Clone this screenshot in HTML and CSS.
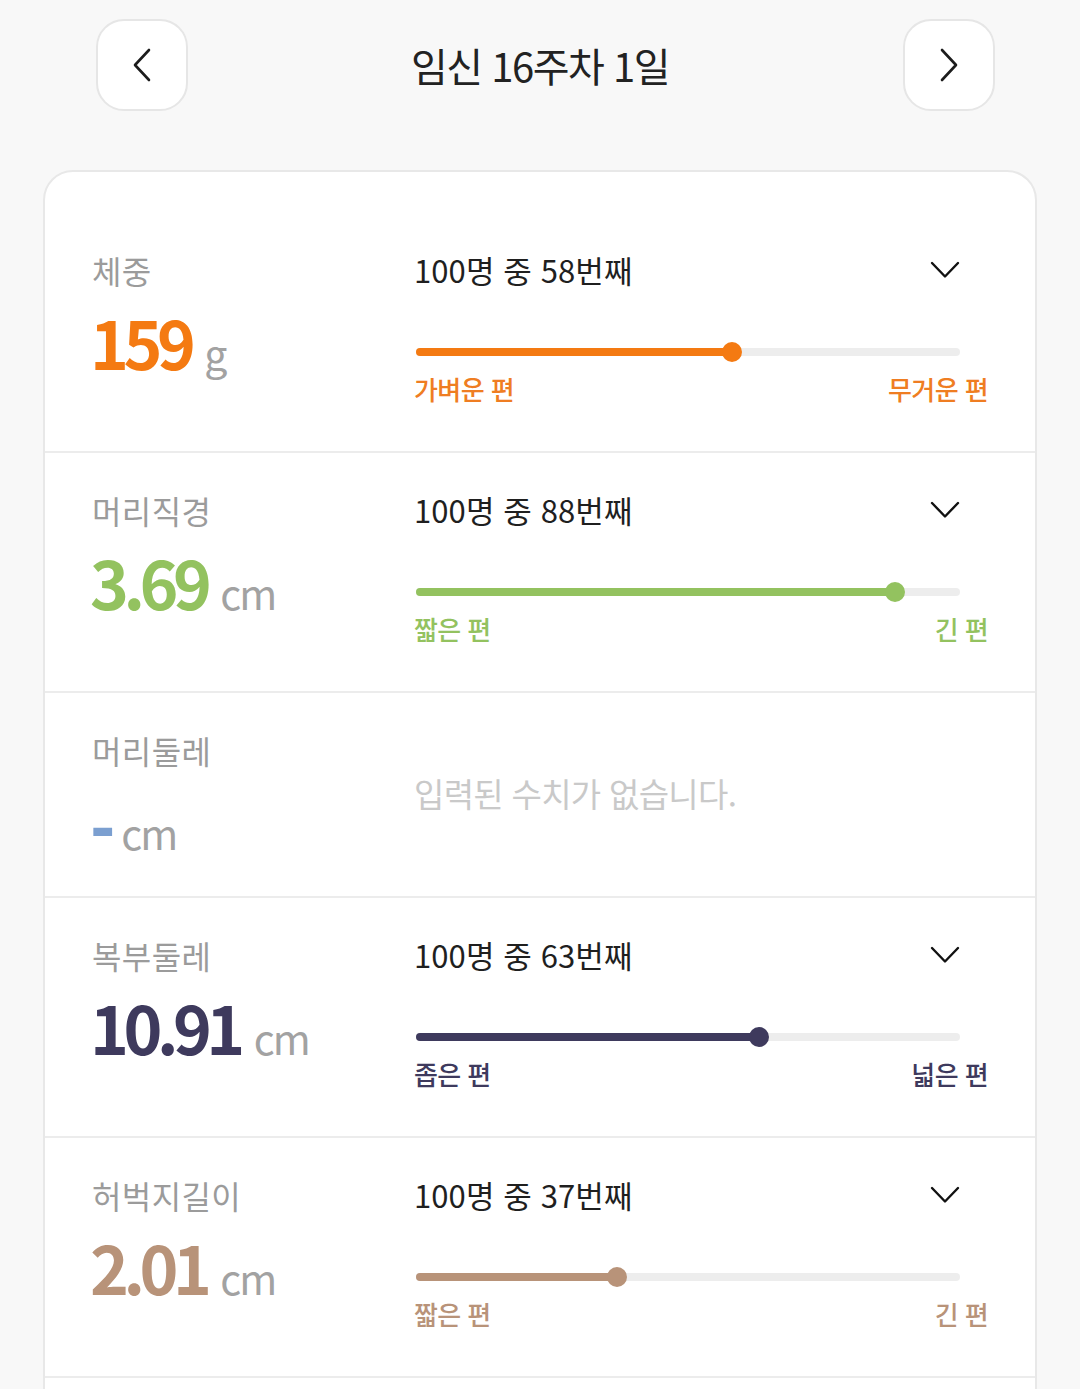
FILE: index.html
```html
<!DOCTYPE html>
<html lang="ko">
<head>
<meta charset="utf-8">
<title>임신 16주차 1일</title>
<link rel="stylesheet" href="styles.css">
</head>
<body>
<header class="header">
  <button class="nav-btn" aria-label="이전">
    <svg width="20" height="34" viewBox="0 0 20 34"><path d="M17 2 L3 17 L17 32" fill="none" stroke="#1c1c1c" stroke-width="2.6" stroke-linecap="round" stroke-linejoin="round"/></svg>
  </button>
  <h1 class="title">임신 16주차 1일</h1>
  <button class="nav-btn" aria-label="다음">
    <svg width="20" height="34" viewBox="0 0 20 34"><path d="M3 2 L17 17 L3 32" fill="none" stroke="#1c1c1c" stroke-width="2.6" stroke-linecap="round" stroke-linejoin="round"/></svg>
  </button>
</header>

<main class="card">
  <section class="row orange">
    <div class="left">
      <div class="label">체중</div>
      <div class="value-line"><span class="value">159</span><span class="unit">g</span></div>
    </div>
    <div class="right">
      <div class="rank-line"><span class="rank">100명 중 58번째</span>
        <svg class="chev" width="30" height="18" viewBox="0 0 30 18"><path d="M2 2 L15 15.5 L28 2" fill="none" stroke="#111" stroke-width="2.4" stroke-linecap="round" stroke-linejoin="round"/></svg>
      </div>
      <div class="track"><div class="fill" style="width:58%"></div><div class="thumb" style="left:58%"></div></div>
      <div class="ends"><span>가벼운 편</span><span>무거운 편</span></div>
    </div>
  </section>

  <section class="row green">
    <div class="left">
      <div class="label">머리직경</div>
      <div class="value-line"><span class="value">3.69</span><span class="unit">cm</span></div>
    </div>
    <div class="right">
      <div class="rank-line"><span class="rank">100명 중 88번째</span>
        <svg class="chev" width="30" height="18" viewBox="0 0 30 18"><path d="M2 2 L15 15.5 L28 2" fill="none" stroke="#111" stroke-width="2.4" stroke-linecap="round" stroke-linejoin="round"/></svg>
      </div>
      <div class="track"><div class="fill" style="width:88%"></div><div class="thumb" style="left:88%"></div></div>
      <div class="ends"><span>짧은 편</span><span>긴 편</span></div>
    </div>
  </section>

  <section class="row blue">
    <div class="left">
      <div class="label">머리둘레</div>
      <div class="value-line"><span class="value dash">-</span><span class="unit">cm</span></div>
    </div>
    <div class="right empty">
      <p class="empty-text">입력된 수치가 없습니다.</p>
    </div>
  </section>

  <section class="row navy">
    <div class="left">
      <div class="label">복부둘레</div>
      <div class="value-line"><span class="value">10.91</span><span class="unit">cm</span></div>
    </div>
    <div class="right">
      <div class="rank-line"><span class="rank">100명 중 63번째</span>
        <svg class="chev" width="30" height="18" viewBox="0 0 30 18"><path d="M2 2 L15 15.5 L28 2" fill="none" stroke="#111" stroke-width="2.4" stroke-linecap="round" stroke-linejoin="round"/></svg>
      </div>
      <div class="track"><div class="fill" style="width:63%"></div><div class="thumb" style="left:63%"></div></div>
      <div class="ends"><span>좁은 편</span><span>넓은 편</span></div>
    </div>
  </section>

  <section class="row tan">
    <div class="left">
      <div class="label">허벅지길이</div>
      <div class="value-line"><span class="value">2.01</span><span class="unit">cm</span></div>
    </div>
    <div class="right">
      <div class="rank-line"><span class="rank">100명 중 37번째</span>
        <svg class="chev" width="30" height="18" viewBox="0 0 30 18"><path d="M2 2 L15 15.5 L28 2" fill="none" stroke="#111" stroke-width="2.4" stroke-linecap="round" stroke-linejoin="round"/></svg>
      </div>
      <div class="track"><div class="fill" style="width:37%"></div><div class="thumb" style="left:37%"></div></div>
      <div class="ends"><span>짧은 편</span><span>긴 편</span></div>
    </div>
  </section>

  <section class="row filler"></section>
</main>
</body>
</html>
```

FILE: styles.css
```css
* { box-sizing: border-box; }

html, body {
  margin: 0;
  padding: 0;
  background: #f8f8f8;
  font-family: "Noto Sans CJK KR", "Noto Sans", sans-serif;
  color: #222;
  overflow: hidden;
}

.header {
  display: grid;
  grid-template-columns: 92px 1fr 92px;
  align-items: center;
  padding: 19px 85px 0 96px;
}

.nav-btn {
  width: 92px;
  height: 92px;
  border: 2px solid #e6e6e6;
  border-radius: 28px;
  background: #fff;
  display: flex;
  align-items: center;
  justify-content: center;
  padding: 0;
}

.title {
  margin: 0;
  padding-right: 11px;
  text-align: center;
  font-size: 40px;
  font-weight: 400;
  line-height: 48px;
  letter-spacing: -1.5px;
  color: #222;
}

.card {
  margin: 59px 43px 0 43px;
  background: #fff;
  border: 2px solid #e8e8e8;
  border-radius: 30px 30px 0 0;
  padding-top: 41px;
}

.row {
  display: grid;
  grid-template-columns: 322px 1fr;
  padding: 37px 47px 46px 47px;
  border-bottom: 2px solid #ececec;
}

.row.blue {
  padding-bottom: 42px;
}

.row.filler {
  height: 120px;
  border-bottom: none;
}

.label {
  font-size: 32px;
  line-height: 40px;
  letter-spacing: 0.4px;
  color: #9b9b9b;
}

.value-line {
  margin-top: 18px;
  height: 66px;
  line-height: 66px;
  white-space: nowrap;
}

.value {
  font-size: 66px;
  font-weight: 700;
  line-height: 1;
  letter-spacing: -5.5px;
  margin-left: -2px;
}

.value.dash {
  position: relative;
  top: 7px;
  font-weight: 900;
  letter-spacing: -2px;
  margin-left: -2px;
}

.unit {
  font-size: 41px;
  line-height: 1;
  margin-left: 14px;
  letter-spacing: -2px;
  color: #a2a2a2;
}

.dash + .unit {
  margin-left: 8px;
}

.right {
  display: flex;
  flex-direction: column;
}

.rank-line {
  display: flex;
  justify-content: space-between;
  align-items: center;
  padding-right: 28px;
  height: 40px;
}

.rank {
  font-size: 31px;
  line-height: 40px;
  letter-spacing: 0.1px;
  color: #1f1f1f;
}

.track {
  position: relative;
  margin: 52px 28px 0 2px;
  height: 20px;
}

.track::before {
  content: "";
  position: absolute;
  left: 0;
  right: 0;
  top: 6px;
  height: 8px;
  border-radius: 4px;
  background: #ededed;
}

.fill {
  position: absolute;
  left: 0;
  top: 6px;
  height: 8px;
  border-radius: 4px;
}

.thumb {
  position: absolute;
  top: 0;
  width: 20px;
  height: 20px;
  border-radius: 50%;
  transform: translateX(-50%);
}

.ends {
  display: flex;
  justify-content: space-between;
  margin-top: 11px;
  font-size: 26px;
  line-height: 32px;
  font-weight: 500;
  letter-spacing: -0.6px;
}

.right.empty {
  justify-content: center;
}

.empty-text {
  margin: 2px 0 0 0;
  font-size: 33px;
  line-height: 40px;
  letter-spacing: -0.7px;
  color: #c9c9c9;
}

/* colour themes */
.orange .value { color: #f47a12; }
.orange .fill, .orange .thumb { background: #f47a12; }
.orange .ends { color: #ef7d22; }

.green .value { color: #93c25f; }
.green .fill, .green .thumb { background: #93c25f; }
.green .ends { color: #93c25f; }

.blue .value { color: #7b9fd0; }

.navy .value { color: #3e3a5d; }
.navy .fill, .navy .thumb { background: #3e3a5d; }
.navy .ends { color: #3e3a5d; }

.tan .value { color: #b89379; }
.tan .fill, .tan .thumb { background: #b89379; }
.tan .ends { color: #b89379; }
```
